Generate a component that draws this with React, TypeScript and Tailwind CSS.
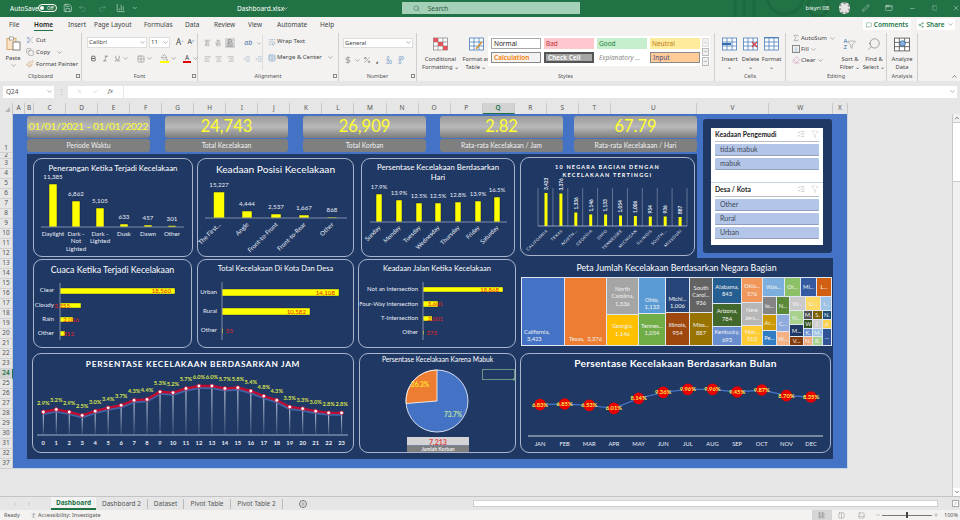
import React from "react";
import {
  Scissors, Copy, Paintbrush, ChevronDown, Bold, Italic, Underline, Grid2x2, PaintBucket,
  AlignLeft, AlignCenter, AlignRight, IndentDecrease, IndentIncrease, WrapText, TableCellsMerge,
  Percent, DollarSign, AlignVerticalJustifyStart, AlignVerticalJustifyCenter, AlignVerticalJustifyEnd,
  X, Check, Sigma, Eraser, Search, Save, Undo2, Redo2, BarChart3, Pen, AppWindow, Minus, Square,
  MessageSquare, Share2, ListChecks, FunnelX, Plus, ChevronLeft, ChevronRight, ChevronUp, PersonStanding,
  ArrowDownToLine, Filter, LayoutGrid, Columns2, PanelBottom,
} from "lucide-react";

const ui = "font-['Noto_Sans',sans-serif]";
const calibri = "font-['Lato',sans-serif]";

function Chev({ className = "" }: { className?: string }) {
  return <ChevronDown size={7} strokeWidth={1.5} className={`text-[#555] ${className}`} />;
}

function TitleBar() {
  return (
    <div className="relative h-[17px] bg-[#217346] text-white flex items-center text-[6.5px] overflow-hidden">
      <svg width="130" height="17" className="absolute left-[730px] top-0" fill="none" stroke="#1d6a40" strokeWidth="3">
        <circle cx="55" cy="-4" r="18" />
        <circle cx="88" cy="6" r="10" />
        <path d="M5 0v17M14 0v17M24 0v17" />
      </svg>
      <span className="ml-[10px] w-[28px]">AutoSave</span>
      <div className="w-[19px] h-[8px] rounded-full border border-white flex items-center justify-end pr-[2px] text-[4.5px]">
        <span className="mr-auto ml-[1px] w-[4px] h-[4px] rounded-full bg-white" />Off
      </div>
      <Save size={10} strokeWidth={1.2} className="ml-[6px]" />
      <Undo2 size={9} strokeWidth={1.2} className="ml-[6px] opacity-40" />
      <Redo2 size={9} strokeWidth={1.2} className="ml-[11px] opacity-40" />
      <BarChart3 size={10} strokeWidth={1.2} className="ml-[9px]" />
      <ChevronDown size={6} className="ml-[7px]" />
      <span className="ml-[99px] w-[44px] text-[6.5px]">Dashboard.xlsx</span>
      <ChevronDown size={7} className="ml-[1px]" />
      <div className="ml-[113px] w-[184px] h-[12px] bg-[#a3d0b6] flex items-center text-[#2f5a42] relative z-10">
        <Search size={7} strokeWidth={1.5} className="ml-[11px]" />
        <span className="ml-[8px]">Search</span>
      </div>
      <span className="ml-[226px] w-[30px] relative text-[6px]">bisyri 08</span>
      <span className="ml-[4px] w-[12px] h-[12px] rounded-full bg-[#e4e4e4] border-2 border-dotted border-[#9a9a9a] relative" />
      <Pen size={8} strokeWidth={1.2} className="ml-[12px] relative" />
      <AppWindow size={8} strokeWidth={1.2} className="ml-[15px] relative" />
      <Minus size={7} strokeWidth={1.2} className="ml-[16px]" />
      <Square size={6} strokeWidth={1.2} className="ml-[16px]" />
      <X size={8} strokeWidth={1.2} className="ml-[15px]" />
    </div>
  );
}

const tabs: [string, string][] = [
  ["File", "w-[30px] pl-[9px]"],
  ["Home", "w-[32px] pl-[4px]"],
  ["Insert", "w-[32px] pl-[6px]"],
  ["Page Layout", "w-[50px] pl-[0px]"],
  ["Formulas", "w-[41px] pl-[0px]"],
  ["Data", "w-[29px] pl-[0px]"],
  ["Review", "w-[34px] pl-[0px]"],
  ["View", "w-[29px] pl-[0px]"],
  ["Automate", "w-[43px] pl-[0px]"],
  ["Help", "w-[30px] pl-[0px]"],
];

function TabsRow() {
  return (
    <div className="h-[16px] flex items-center bg-[#f3f2f1] text-[6.5px] text-[#444]">
      {tabs.map(([t, c]) => (
        <div key={t} className={`${c} h-full flex items-center`}>
          <span className={t === "Home" ? "relative font-semibold text-[#222] border-b border-[#217346] pb-[1px] mt-[1px]" : ""}>{t}</span>
        </div>
      ))}
      <div className="ml-auto mr-[5px] flex items-center gap-[6px]">
        <div className="w-[48px] h-[11px] bg-white flex items-center justify-center gap-[2px] text-[#217346] font-semibold">
          <MessageSquare size={6} strokeWidth={1.5} />Comments
        </div>
        <div className="w-[38px] h-[11px] bg-white flex items-center justify-center gap-[2px] text-[#217346] font-semibold">
          <Share2 size={6} strokeWidth={1.5} />Share<Chev />
        </div>
      </div>
    </div>
  );
}

function Group({ w, label, children, launcher = true }: { w: string; label: string; children: React.ReactNode; launcher?: boolean }) {
  return (
    <div className={`${w} h-full flex flex-col border-r border-[#cfcfcf]`}>
      <div className="flex-1 min-h-0 flex">{children}</div>
      <div className="h-[9px] relative flex items-center justify-center text-[5.5px] text-[#555] leading-none">
        {label}
        {launcher && <span className="absolute right-[1px] top-[2px] w-[4px] h-[4px] border border-[#888] bg-transparent" />}
      </div>
    </div>
  );
}

function GridIcon({ w = 15, h = 14, color = "#4a7ebb", mark }: { w?: number; h?: number; color?: string; mark?: React.ReactNode }) {
  return (
    <svg width={w} height={h} viewBox="0 0 15 14" fill="none" stroke={color} strokeWidth="0.8">
      <rect x="0.5" y="1" width="14" height="12" fill="#fff" />
      <path d="M0.5 5h14M0.5 9h14M5 1v12M10 1v12" />
      {mark}
    </svg>
  );
}

function Big({ icon, lines, w }: { icon: React.ReactNode; lines: string[]; w: string }) {
  return (
    <div className={`${w} flex flex-col items-center pt-[4px] text-[5.8px] text-[#444] leading-[8px] whitespace-nowrap`}>
      <div className="h-[15px] flex items-center justify-center">{icon}</div>
      <div className="mt-[3px] text-center">{lines.map((l) => <div key={l}>{l}</div>)}</div>
    </div>
  );
}

function StyleCell({ cls, children }: { cls: string; children: string }) {
  return <div className={`h-[11px] w-[50px] flex items-center pl-[2px] text-[6.5px] ${cls}`}>{children}</div>;
}

function Ribbon() {
  return (
    <div className="h-[48px] bg-[#f3f2f1] flex text-[#444]">
      <Group w="w-[82px]" label="Clipboard">
        <div className="w-[26px] flex flex-col items-center pt-[3px] text-[5.8px] leading-[8px]">
          <svg width="15" height="15" viewBox="0 0 15 15" fill="none">
            <rect x="1" y="2.5" width="9" height="11" fill="#fbe3c4" stroke="#d39a55" strokeWidth="0.8" />
            <rect x="3.5" y="1" width="4" height="3" fill="#fff" stroke="#888" strokeWidth="0.7" />
            <rect x="7" y="6" width="7" height="8" fill="#fff" stroke="#666" strokeWidth="0.8" />
          </svg>
          <span className="mt-[3px]">Paste</span>
          <Chev />
        </div>
        <div className="flex flex-col gap-[3px] pt-[3px] text-[6px] leading-[9px]">
          <div className="flex items-center gap-[2px]"><Scissors size={8} strokeWidth={1} className="text-[#4a6fa5]" />Cut</div>
          <div className="flex items-center gap-[2px]"><Copy size={8} strokeWidth={1} />Copy<Chev className="ml-[4px]" /></div>
          <div className="flex items-center gap-[2px]"><Paintbrush size={8} strokeWidth={1} className="text-[#c0741f]" />Format Painter</div>
        </div>
      </Group>
      <Group w="w-[116px]" label="Font">
        <div className="flex flex-col pl-[5px] pt-[4px]">
          <div className="flex items-center gap-[2px] h-[11px]">
            <div className="w-[60px] h-[11px] bg-white border border-[#ddd] flex items-center pl-[1px] text-[6px]">Calibri<Chev className="ml-auto" /></div>
            <div className="w-[21px] h-[11px] bg-white border border-[#ddd] flex items-center pl-[1px] text-[6px]">11<Chev className="ml-auto" /></div>
            <span className="ml-[4px] text-[8px]">A<sup className="text-[4px] text-[#4a7ebb]">^</sup></span>
            <span className="ml-[2px] text-[7px]">A<sup className="text-[4px] text-[#4a7ebb]">v</sup></span>
          </div>
          <div className="flex items-center h-[12px] mt-[5px] pl-[3px]">
            <Bold size={7} strokeWidth={2.5} />
            <Italic size={7} strokeWidth={1.5} className="ml-[5px]" />
            <Underline size={7} strokeWidth={1.5} className="ml-[5px]" />
            <Chev className="ml-[1px]" />
            <Grid2x2 size={8} strokeWidth={1} className="ml-[8px]" />
            <Chev className="ml-[1px]" />
            <div className="ml-[7px] flex flex-col items-center"><PaintBucket size={7} strokeWidth={1} /><span className="w-[9px] h-[2px] bg-[#ffff00]" /></div>
            <Chev className="ml-[1px]" />
            <div className="ml-[6px] flex flex-col items-center text-[6.5px] leading-[7px]">A<span className="w-[8px] h-[2px] bg-[#e00000]" /></div>
            <Chev className="ml-[1px]" />
          </div>
        </div>
      </Group>
      <Group w="w-[141px]" label="Alignment">
        <div className="pl-[6px] pt-[2px] w-[65px] border-r border-[#ddd] my-[2px] flex flex-col">
          <div className="flex items-center h-[13px] gap-[4px]">
            <AlignVerticalJustifyStart size={8} strokeWidth={1} />
            <AlignVerticalJustifyCenter size={8} strokeWidth={1} />
            <span className="bg-[#d4d4d4] p-[1px]"><AlignVerticalJustifyEnd size={8} strokeWidth={1} /></span>
            <span className="ml-[5px] text-[7px] italic text-[#4a6fa5]">ab</span><Chev />
          </div>
          <div className="flex items-center h-[13px] gap-[4px] mt-[3px]">
            <AlignLeft size={8} strokeWidth={1} />
            <AlignCenter size={8} strokeWidth={1} />
            <AlignRight size={8} strokeWidth={1} />
            <IndentDecrease size={8} strokeWidth={1} className="ml-[5px] text-[#4a6fa5]" />
            <IndentIncrease size={8} strokeWidth={1} className="text-[#4a6fa5]" />
          </div>
        </div>
        <div className="pl-[5px] pt-[4px] text-[6px] flex flex-col gap-[6px]">
          <div className="flex items-center gap-[1px] h-[10px]"><WrapText size={8} strokeWidth={1} className="text-[#4a6fa5]" />Wrap Text</div>
          <div className="flex items-center gap-[1px] h-[10px]"><TableCellsMerge size={8} strokeWidth={1} className="text-[#2f6ca8]" />Merge &amp; Center<Chev className="ml-[4px]" /></div>
        </div>
      </Group>
      <Group w="w-[78px]" label="Number">
        <div className="pl-[4px] pt-[5px] flex flex-col">
          <div className="w-[70px] h-[10px] bg-white border border-[#ddd] flex items-center pl-[1px] text-[5.8px]">General<Chev className="ml-auto" /></div>
          <div className="flex items-center mt-[8px] pl-[1px]">
            <DollarSign size={8} strokeWidth={1.2} />
            <Chev className="ml-[2px]" />
            <Percent size={8} strokeWidth={1.2} className="ml-[2px]" />
            <span className="ml-[5px] text-[9px] leading-[8px] font-bold">,</span>
            <span className="ml-[7px] text-[4.5px] leading-[4.5px] text-[#4a7ebb] w-[8px]">.0<br />.00</span>
            <span className="ml-[4px] text-[4.5px] leading-[4.5px] text-[#4a7ebb] w-[8px]">.00<br />.0</span>
          </div>
        </div>
      </Group>
      <Group w="w-[298px]" label="Styles" launcher={false}>
        <Big w="w-[47px]" lines={["Conditional", "Formatting ⌄"]} icon={<GridIcon color="#8a8a8a" mark={<path d="M5 5h5v4H5zM0.5 1h4.500v4H.5zM10 9h4.500v4H10z" fill="#e2545c" stroke="none" />} />} />
        <Big w="w-[24px]" lines={["Format as", "Table ⌄"]} icon={<GridIcon mark={<path d="M7 12L13 5" stroke="#d4912a" strokeWidth="1.5" />} />} />
        <div className="ml-[0px] mt-[3px] w-[222px] h-[30px] bg-white pl-[3px] pt-[2px] flex">
          <div className="grid grid-cols-[50px_50px_50px_50px] gap-x-[3px] gap-y-[3px] content-start">
            <StyleCell cls="bg-white border border-[#a8a8a8] text-[#222]">Normal</StyleCell>
            <StyleCell cls="bg-[#ffc7ce] text-[#c0303a]">Bad</StyleCell>
            <StyleCell cls="bg-[#c6efce] text-[#1f7a35]">Good</StyleCell>
            <StyleCell cls="bg-[#ffeb9c] text-[#b87a1a]">Neutral</StyleCell>
            <StyleCell cls="bg-[#f2f2f2] border border-[#8a8a8a] text-[#fa7d00] font-semibold">Calculation</StyleCell>
            <StyleCell cls="bg-[#a5a5a5] border-2 border-[#555] text-white font-semibold">Check Cell</StyleCell>
            <StyleCell cls="bg-white text-[#8a8a8a] italic">Explanatory ...</StyleCell>
            <StyleCell cls="bg-[#ffcc99] border border-[#8a8a8a] text-[#4a4a7a]">Input</StyleCell>
          </div>
          <div className="ml-[2px] w-[7px] flex flex-col gap-px">
            <div className="h-[9px] bg-[#f3f2f1] border border-[#ddd] flex items-center justify-center"><ChevronUp size={5} className="text-[#aaa]" /></div>
            <div className="h-[9px] bg-[#f3f2f1] border border-[#bbb] flex items-center justify-center"><ChevronDown size={5} /></div>
            <div className="h-[9px] bg-[#f3f2f1] border border-[#bbb] flex items-center justify-center"><ChevronDown size={5} /></div>
          </div>
        </div>
      </Group>
      <Group w="w-[71px]" label="Cells" launcher={false}>
        <div className="flex pl-[4px]">
          <Big w="w-[21px]" lines={["Insert", "⌄"]} icon={<GridIcon mark={<path d="M0 7h9" stroke="#2f6ca8" strokeWidth="2" />} />} />
          <Big w="w-[21px]" lines={["Delete", "⌄"]} icon={<GridIcon mark={<path d="M9 5l5 5m0-5l-5 5" stroke="#d83b3b" strokeWidth="1.2" />} />} />
          <Big w="w-[21px]" lines={["Format", "⌄"]} icon={<GridIcon mark={<path d="M0 0h15" stroke="#2f6ca8" strokeWidth="1.5" />} />} />
        </div>
      </Group>
      <Group w="w-[101px]" label="Editing" launcher={false}>
        <div className="w-[52px] pl-[6px] pt-[1px] flex flex-col gap-[2px] text-[6px] leading-[9px]">
          <div className="flex items-center gap-[1px]"><Sigma size={8} strokeWidth={1} />AutoSum<Chev className="ml-[1px]" /></div>
          <div className="flex items-center gap-[1px]"><ArrowDownToLine size={8} strokeWidth={1} className="text-[#2f6ca8] border border-[#888]" />Fill<Chev /></div>
          <div className="flex items-center gap-[1px]"><Eraser size={8} strokeWidth={1} className="text-[#c2589a]" />Clear<Chev /></div>
        </div>
        <Big w="w-[24px]" lines={["Sort &", "Filter ⌄"]} icon={<span className="flex items-center text-[6px] leading-[6px] text-[#2f6ca8]"><span>A<br />Z</span><Filter size={9} strokeWidth={1} className="text-[#555]" /></span>} />
        <Big w="w-[24px]" lines={["Find &", "Select ⌄"]} icon={<Search size={14} strokeWidth={0.8} className="-scale-x-100" />} />
      </Group>
      <Group w="w-[31px]" label="Analysis" launcher={false}>
        <Big w="w-[30px]" lines={["Analyze", "Data"]} icon={<GridIcon w={16} h={15} color="#555" mark={<circle cx="8" cy="6" r="2.500" fill="#8fb4dd" stroke="#2f6ca8" />} />} />
      </Group>
      <div className="flex-1 flex items-end justify-end pr-[2px] pb-[1px]"><ChevronUp size={7} /></div>
    </div>
  );
}

function FormulaBar() {
  return (
    <div className="h-[22px] bg-[#e6e6e6] pt-[5px] text-[#555]">
      <div className="h-[12px] flex items-center pl-[3px] pr-[3px] text-[6.5px]">
        <div className="w-[51px] h-full bg-white flex items-center pl-[3px]">Q24<Chev className="ml-auto mr-[1px]" /></div>
        <span className="w-[14px] text-center text-[#aaa]">⋮</span>
        <div className="w-[56px] h-full bg-white flex items-center pl-[8px] gap-[9px] text-[#999] border-r border-[#e6e6e6]">
          <X size={7} strokeWidth={1} /><Check size={7} strokeWidth={1} /><span className="italic text-[#555] text-[6px]">fx</span>
        </div>
        <div className="flex-1 h-full bg-white flex items-center justify-end pr-[1px]"><Chev /></div>
      </div>
    </div>
  );
}

const cols = ["A", "B", "C", "D", "E", "F", "G", "H", "I", "J", "K", "L", "M", "N", "O", "P", "Q", "R", "S", "T", "U", "V", "W", "X"];

function ColHeaders() {
  return (
    <div className="h-[11px] flex bg-[#e6e6e6] text-[6.5px] text-[#555]">
      <div className="w-[13px] border-r border-[#c4c4c4] flex items-end justify-end pr-[2px] pb-[2px]">
        <span className="w-0 h-0 border-l-[5px] border-l-transparent border-b-[5px] border-b-[#b5b5b5]" />
      </div>
      <div className="grid grid-cols-[12px_9px_repeat(18,32.06px)_86px_72px_64px_15px]">
        {cols.map((c) => (
          <div key={c} className={`flex items-center justify-center border-r border-[#c9c9c9] ${c === "Q" ? "bg-[#d2d2d2] text-[#217346] border-b border-b-[#217346] font-semibold" : ""}`}>{c}</div>
        ))}
      </div>
    </div>
  );
}

const rows: [string, string][] = [
  ["1", "h-[39px] items-end pb-[0px]"],
  ["2", "h-[6px] items-center overflow-hidden"],
  ...Array.from({ length: 30 }, (_, i): [string, string] => [String(i + 3), "h-[10px] items-center"]),
  ["37", "h-[10px] items-center"],
];

function RowHeaders() {
  return (
    <div className="w-[13px] bg-[#e6e6e6] text-[6.5px] text-[#555] flex flex-col leading-none">
      {rows.map(([r, c]) => (
        <div key={r} className={`flex justify-center border-b border-[#d0d0d0] border-r ${c} ${r === "24" ? "bg-[#d2d2d2] text-[#217346] border-r-[#217346] font-semibold" : "border-r-[#c9c9c9]"}`}>{r}</div>
      ))}
    </div>
  );
}

function Kpi({ value, label, cls, big = true }: { value: string; label: string; cls: string; big?: boolean }) {
  return (
    <div className={`${cls} w-[123px] flex flex-col gap-[1px] ${calibri}`}>
      <div className={`h-[22px] rounded-[3px] bg-gradient-to-b from-[#9a9a9a] via-[#b9b9b9] to-[#7b7b7b] flex items-center justify-center text-[#ffff2e] ${big ? "text-[16.500px]" : "text-[10px]"}`}>{value}</div>
      <div className="h-[13px] rounded-[3px] bg-[#7f7f7f] flex items-center justify-center text-[6.800px] text-[#f0f0f0]">{label}</div>
    </div>
  );
}

function Card({ cls, title, titleCls, view, children }: { cls: string; title: React.ReactNode; titleCls: string; view: [number, number, number, number]; children: React.ReactNode }) {
  return (
    <div className={`${cls} rounded-[9px] border border-[#aab5cc] flex flex-col ${calibri}`}>
      <div className={`${titleCls} flex items-center justify-center text-center text-white shrink-0 whitespace-nowrap`}>{title}</div>
      <svg width={view[2]} height={view[3]} viewBox={view.join(" ")} className="block overflow-visible" fill="#fff">
        {children}
      </svg>
    </div>
  );
}

const W = "#e9edf5";
const Y = "#ffff00";

function VBars({ data, axis, x1, x2, size = 6.2, rot = false, catY }: {
  data: { x: number; w: number; top: number; val: string; cat: string | string[] }[];
  axis: number; x1: number; x2: number; size?: number; rot?: boolean; catY: number;
}) {
  return (
    <g>
      {data.map((d) => (
        <g key={d.x}>
          <rect x={d.x - d.w / 2} y={d.top} width={d.w} height={axis - d.top} fill={Y} stroke="#14264a" strokeWidth="0.5" />
          <text x={d.x} y={d.top - 5} textAnchor="middle" fontSize={size} fill={W}>{d.val}</text>
          {rot ? (
            <text x={d.x + 2} y={catY} textAnchor="end" fontSize={size} fill={W} transform={`rotate(-45 ${d.x + 2} ${catY})`}>{d.cat as string}</text>
          ) : (
            (d.cat as string[]).map((l, i) => (
              <text key={l} x={d.x} y={catY + i * 7.3} textAnchor="middle" fontSize={size} fill={W}>{l}</text>
            ))
          )}
        </g>
      ))}
      <line x1={x1} x2={x2} y1={axis} y2={axis} stroke="#9aa6bd" strokeWidth="0.8" />
    </g>
  );
}

function HBars({ axis, y1, y2, labelX, data, size = 6.2 }: {
  axis: number; y1: number; y2: number; labelX: number; size?: number;
  data: { y: number; h: number; end: number; cat: string; val: string; valX: number; labY: number }[];
}) {
  return (
    <g>
      {data.map((d) => (
        <g key={d.cat}>
          <rect x={axis} y={d.y} width={d.end - axis} height={d.h} fill={Y} stroke="#14264a" strokeWidth="0.4" />
          <text x={labelX} y={d.labY} textAnchor="end" fontSize={size} fill={W}>{d.cat}</text>
          <text x={d.valX} y={d.y + d.h / 2 + 2.2} textAnchor="end" fontSize={size} fill="#e8201c">{d.val}</text>
        </g>
      ))}
      <line x1={axis} x2={axis} y1={y1} y2={y2} stroke="#9aa6bd" strokeWidth="0.8" />
    </g>
  );
}

const hours = [2.9, 3.2, 2.9, 2.5, 3.0, 3.4, 3.7, 4.3, 4.4, 5.3, 5.2, 5.7, 6.0, 6.0, 5.7, 5.8, 5.4, 4.8, 4.3, 3.5, 3.3, 3.0, 2.8, 2.8];

function HourChart() {
  const px = (i: number) => 43.3 + i * 12.97;
  const py = (p: number) => 411 - (p - 2.9) * 8.4;
  const line = hours.map((p, i) => `${px(i)},${py(p)}`).join(" ");
  return (
    <g>
      <defs>
        <linearGradient id="stem" x1="0" y1="0" x2="0" y2="1">
          <stop offset="0" stopColor="#dfe6f2" />
          <stop offset="1" stopColor="#dfe6f2" stopOpacity="0.15" />
        </linearGradient>
      </defs>
      {hours.map((p, i) => (
        <rect key={i} x={px(i) - 0.5} y={py(p)} width="1" height={433 - py(p)} fill="url(#stem)" />
      ))}
      <polyline points={line} fill="none" stroke="#4a6fb5" strokeWidth="4" transform="translate(0 1)" opacity="0.8" />
      <polyline points={line} fill="none" stroke="#c00a2e" strokeWidth="2.4" />
      {hours.map((p, i) => (
        <g key={i}>
          <circle cx={px(i)} cy={py(p)} r="1.900" fill="#fff" stroke="#c00a2e" strokeWidth="0.8" />
          <text x={px(i)} y={py(p) - 7} textAnchor="middle" fontSize="5.600" fontWeight="700" fill="#d6e04c">{p.toFixed(1)}%</text>
          <text x={px(i)} y={444} textAnchor="middle" fontSize="5.800" fontWeight="700" fill={W}>{i}</text>
        </g>
      ))}
      <line x1="37" x2="348" y1="434" y2="434" stroke="#c9d2e2" strokeWidth="0.8" />
    </g>
  );
}

const months = [
  ["JAN", 176, "6.83%"], ["FEB", 174, "6.85%"], ["MAR", 178, "6.53%"], ["APR", 187, "6.01%"], ["MAY", 157, "8.14%"], ["JUN", 139, "9.36%"],
  ["JUL", 130, "9.96%"], ["AUG", 130, "9.96%"], ["SEP", 138, "9.45%"], ["OCT", 132, "9.87%"], ["NOV", 149, "8.70%"], ["DEC", 153, "8.35%"],
] as const;

function MonthChart() {
  const px = (i: number) => 540 + i * 24.64;
  const py = (v: number) => 345 + v / 3;
  return (
    <g>
      <polyline points={months.map((m, i) => `${px(i)},${py(m[1])}`).join(" ")} fill="none" stroke="#4472c4" strokeWidth="1.400" />
      {months.map((m, i) => (
        <g key={m[0]}>
          <circle cx={px(i)} cy={py(m[1])} r="5.800" fill="#e80000" />
          <text x={px(i)} y={py(m[1]) + 2} textAnchor="middle" fontSize="5.800" fontWeight="700" fill="#ffe94a">{m[2]}</text>
          <text x={px(i)} y={445} textAnchor="middle" fontSize="5.800" fill={W}>{m[0]}</text>
        </g>
      ))}
      <line x1="528" x2="823" y1="435" y2="435" stroke="#fff" strokeWidth="0.8" />
    </g>
  );
}

const states = [
  ["CALIFORNIA", "3,423", 33], ["TEXAS", "3,376", 32.500], ["NORTH...", "1,336", 13.500], ["GEORGIA", "1,146", 11.500], ["OHIO", "1,133", 11.500],
  ["TENNESSEE", "1,054", 10.500], ["MICHIGAN", "1,006", 10], ["ILLINOIS", "954", 9.500], ["SOUTH...", "936", 9.500], ["MISSOURI", "887", 9],
] as const;

function StateChart() {
  return (
    <g>
      {states.map((s, i) => {
        const gx = 538 + i * 14.9;
        const cx = gx + 8;
        return (
          <g key={s[0]}>
            <line x1={gx} x2={gx} y1="187" y2="225" stroke="#8d9ab5" strokeWidth="0.6" />
            <rect x={cx - 1.5} y={225 - s[2]} width="3" height={s[2]} fill={Y} />
            <text x={cx + 1.800} y={222 - s[2]} fontSize="4.800" fontWeight="700" fill={W} transform={`rotate(-90 ${cx + 1.800} ${222 - s[2]})`}>{s[1]}</text>
            <text x={cx + 2} y="230" textAnchor="end" fontSize="4" letterSpacing="0.500" fill={W} transform={`rotate(-45 ${cx + 2} 230)`}>{s[0]}</text>
          </g>
        );
      })}
      <line x1="687" x2="687" y1="187" y2="225" stroke="#8d9ab5" strokeWidth="0.6" />
      <line x1="538" x2="687" y1="225" y2="225" stroke="#c6cfdf" strokeWidth="0.7" />
    </g>
  );
}

function PieChart() {
  const cx = 437;
  const cy = 400;
  const r = 31;
  const a = (26.3 / 100) * 2 * Math.PI;
  const sx = cx - r * Math.sin(a);
  const sy = cy - r * Math.cos(a);
  return (
    <g>
      <circle cx={cx} cy={cy} r={r} fill="#4472c4" stroke="#fff" strokeWidth="0.8" />
      <path d={`M${cx} ${cy} L${sx} ${sy} A${r} ${r} 0 0 1 ${cx} ${cy - r} Z`} fill="#ed7d31" stroke="#fff" strokeWidth="0.8" />
      <text x="420" y="386" textAnchor="middle" fontSize="6.500" fontWeight="700" fill="#ffe22e">26.3%</text>
      <text x="453" y="416" textAnchor="middle" fontSize="6.500" fontWeight="700" fill="#b9e0a0">73.7%</text>
      <rect x="407" y="436" width="62" height="8.500" fill="#d4d4d6" />
      <text x="438" y="443.500" textAnchor="middle" fontSize="7" fontWeight="700" fill="#e04545">7,213</text>
      <rect x="407" y="445" width="62" height="6" fill="#7f7f7f" />
      <text x="438" y="450.300" textAnchor="middle" fontSize="5" fontWeight="700" fill="#f0f0f0">Jumlah Korban</text>
      <rect x="482.500" y="368.500" width="32" height="10" fill="none" stroke="#6f9f8a" strokeWidth="0.9" />
      <rect x="513" y="377" width="2.500" height="2.500" fill="#6f9f8a" />
    </g>
  );
}

function Tile({ cls, children }: { cls: string; children?: React.ReactNode }) {
  return (
    <div className={`${cls} flex flex-col items-center justify-center text-center overflow-hidden text-[5.800px] leading-[7.500px] text-[#f2f2f2]`}>{children}</div>
  );
}

function Treemap() {
  return (
    <div className="h-[69px] w-[311px] bg-[#dfe6f2] p-px flex gap-px">
      <Tile cls="w-[42px] !justify-end !items-start pl-[2px] pb-[2px] !text-left bg-[#4472c4]">California,<br />&nbsp;&nbsp;3,423</Tile>
      <Tile cls="w-[41px] !justify-end pb-[2px] bg-[#ed7d31]">Texas,&nbsp; 3,376</Tile>
      <div className="w-[31px] flex flex-col gap-px">
        <Tile cls="h-[36px] bg-[#a5a5a5]">North<br />Carolina,<br />1,336</Tile>
        <Tile cls="flex-1 bg-[#ffc000]">Georgia,<br />1,146</Tile>
      </div>
      <div className="w-[26px] flex flex-col gap-px">
        <Tile cls="h-[35px] bg-[#5b9bd5] !justify-end pb-[2px]">Ohio,<br />1,133</Tile>
        <Tile cls="flex-1 bg-[#70ad47]">Tennes...<br />1,054</Tile>
      </div>
      <div className="w-[23px] flex flex-col gap-px">
        <Tile cls="h-[34px] bg-[#264478] !justify-end pb-[2px]">Michi...<br />1,006</Tile>
        <Tile cls="flex-1 bg-[#9e480e]">Illinois,<br />954</Tile>
      </div>
      <div className="w-[22px] flex flex-col gap-px">
        <Tile cls="h-[34px] bg-[#636363]">South<br />Carol...<br />936</Tile>
        <Tile cls="flex-1 bg-[#997300]">Miss...<br />887</Tile>
      </div>
      <div className="w-[28px] flex flex-col gap-px">
        <Tile cls="h-[25px] bg-[#255e91]">Alabama,<br />843</Tile>
        <Tile cls="h-[22px] bg-[#43682b]">Arizona,<br />784</Tile>
        <Tile cls="flex-1 bg-[#698ed0]">Kentucky,<br />693</Tile>
      </div>
      <div className="w-[20px] flex flex-col gap-px">
        <Tile cls="h-[24px] bg-[#f1975a]">Okla...<br />576</Tile>
        <Tile cls="h-[22px] bg-[#b7b7b7]">New<br />Jers...</Tile>
        <Tile cls="flex-1 bg-[#ffcd33]">Mar...<br />513</Tile>
      </div>
      <div className="flex-1 flex flex-col gap-px">
        <div className="h-[20px] flex gap-px">
          <Tile cls="w-[21px] bg-[#7cafdd]">Was...</Tile>
          <Tile cls="w-[15px] bg-[#8cc168]">Or...</Tile>
          <Tile cls="w-[15px] bg-[#335aa1]">Mi...</Tile>
          <Tile cls="flex-1 bg-[#d26012]">L...</Tile>
        </div>
        <div className="flex-1 flex gap-px">
          <div className="w-[13px] flex flex-col gap-px">
            <Tile cls="h-[17px] bg-[#848484]">Io...</Tile>
            <Tile cls="h-[15px] bg-[#cc9a00]">Ar...</Tile>
            <Tile cls="flex-1 bg-[#327dc2]">Pe...</Tile>
          </div>
          <div className="w-[12px] flex flex-col gap-px">
            <Tile cls="h-[17px] bg-[#5a8a39]">N...</Tile>
            <Tile cls="h-[16px] bg-[#8faadc]">C...</Tile>
            <Tile cls="flex-1 bg-[#f4b183]">W...</Tile>
          </div>
          <div className="flex-1 flex flex-col gap-px">
            <div className="h-[13px] flex gap-px">
              <Tile cls="w-[15px] bg-[#c9c9c9]">W...</Tile>
              <Tile cls="w-[14px] bg-[#ffd966]">U...</Tile>
              <Tile cls="flex-1 bg-[#9dc3e6]">I...</Tile>
            </div>
            <div className="flex-1 flex gap-px">
              <div className="w-[13px] flex flex-col gap-px">
                <Tile cls="h-[13px] bg-[#a9d18e]">N...</Tile>
                <Tile cls="h-[11px] bg-[#1f3864]">M...</Tile>
                <Tile cls="flex-1 bg-[#843c0c]">V...</Tile>
              </div>
              <div className="flex-1 grid grid-cols-3 grid-rows-4 gap-px text-[4px]">
                <Tile cls="bg-[#525252]">M.</Tile>
                <Tile cls="bg-[#7f6000]">S.</Tile>
                <Tile cls="bg-[#1f4e79]">N.</Tile>
                <Tile cls="bg-[#375623]">W</Tile>
                <Tile cls="bg-[#d0cece]">C</Tile>
                <Tile cls="bg-[#ffd24d]">o</Tile>
                <Tile cls="bg-[#6f94d6]">K.</Tile>
                <Tile cls="bg-[#9dc3e6]">M.</Tile>
                <Tile cls="row-span-2 bg-[#2f5597]">...</Tile>
                <Tile cls="bg-[#f4a77a]">N.</Tile>
                <Tile cls="bg-[#a9d18e]">R.</Tile>
              </div>
            </div>
          </div>
        </div>
      </div>
    </div>
  );
}

function SlicerItem({ children }: { children: string }) {
  return <div className="h-[12px] rounded-[1px] bg-[#b4c6e7] border-b border-[#8f9fbd] flex items-center pl-[5px] text-[7px] text-[#3c4658]">{children}</div>;
}

function SlicerHead({ title }: { title: string }) {
  return (
    <div className="h-[14px] mx-[1px] flex items-center border-b border-[#b9c0cc] text-[6.800px] font-bold text-[#222]">
      <span>{title}</span>
      <ListChecks size={8} strokeWidth={1} className="ml-auto text-[#666]" />
      <FunnelX size={8} strokeWidth={1} className="ml-[6px] text-[#aaa]" />
    </div>
  );
}

function Slicers() {
  return (
    <div className={`w-[129px] h-[134px] mt-[5px] ml-[6px] rounded-[3px] bg-[#1f3864] pt-[9px] pl-[8px] ${calibri}`}>
      <div className="w-[112px] h-[117px] bg-white px-[3px]">
        <div className="h-[54px]">
          <SlicerHead title="Keadaan Pengemudi" />
          <div className="mt-[2px] mx-[1px] flex flex-col gap-[2px]">
            <SlicerItem>  tidak mabuk</SlicerItem>
            <SlicerItem>mabuk</SlicerItem>
          </div>
        </div>
        <div className="border-t border-[#c6d4ea] -mx-[3px] px-[3px]">
          <SlicerHead title="Desa / Kota" />
          <div className="mt-[2px] mx-[1px] flex flex-col gap-[2px]">
            <SlicerItem>Other</SlicerItem>
            <SlicerItem>Rural</SlicerItem>
            <SlicerItem>Urban</SlicerItem>
          </div>
        </div>
      </div>
    </div>
  );
}

function Sheet() {
  return (
    <div className="w-[835px] h-[355px] bg-[#4472c4] pl-[14px] border-r border-b border-[#c9d3e6]">
      <div className="flex">
        <div className="w-[670px] shrink-0">
          <div className="flex pt-[2px] pb-[2px]">
            <Kpi cls="" value="01/01/2021 - 01/01/2022" label="Periode Waktu" big={false} />
            <Kpi cls="ml-[15px]" value="24,743" label="Total Kecelakaan" />
            <Kpi cls="ml-[15px]" value="26,909" label="Total Korban" />
            <Kpi cls="ml-[14px]" value="2.82" label="Rata-rata Kecelakaan / Jam" />
            <Kpi cls="ml-[11px]" value="67.79" label="Rata-rata Kecelakaan / Hari" />
          </div>
          <div className="h-[104px] bg-[#1f3864] pt-[4px] pl-[6px] flex items-start">
            <Card cls="w-[160px] h-[99px]" title="Penerangan Ketika Terjadi Kecelakaan" titleCls="h-[20px] text-[7.800px]" view={[34, 178, 158, 77]}>
              <VBars axis={226} x1={41} x2={184} catY={235} data={[
                { x: 53, w: 8, top: 183, val: "11,385", cat: ["Daylight"] },
                { x: 76, w: 8, top: 200, val: "6,862", cat: ["Dark -", "Not", "Lighted"] },
                { x: 100, w: 8, top: 207, val: "5,105", cat: ["Dark -", "Lighted"] },
                { x: 124, w: 8, top: 223, val: "633", cat: ["Dusk"] },
                { x: 148, w: 8, top: 224, val: "457", cat: ["Dawn"] },
                { x: 172, w: 8, top: 224.5, val: "301", cat: ["Other"] },
              ]} />
            </Card>
            <Card cls="w-[157px] h-[99px] ml-[4px]" title="Keadaan Posisi Kecelakaan" titleCls="h-[22px] text-[10.200px]" view={[198, 180, 155, 75]}>
              <VBars rot axis={217} x1={205} x2={347} catY={224} data={[
                { x: 219, w: 11, top: 191, val: "15,227", cat: "The First..." },
                { x: 247, w: 10, top: 210, val: "4,444", cat: "Angle" },
                { x: 276, w: 10, top: 213, val: "2,537", cat: "Front-to-Front" },
                { x: 304, w: 10, top: 214, val: "1,667", cat: "Front-to-Rear" },
                { x: 332, w: 10, top: 216, val: "868", cat: "Other" },
              ]} />
            </Card>
            <Card cls="w-[154px] h-[99px] ml-[7px]" title={<span>Persentase Kecelakaan Berdasarkan<br />Hari</span>} titleCls="h-[26px] text-[7.800px] leading-[10px]" view={[362, 184, 152, 71]}>
              <VBars rot axis={221} x1={370} x2={507} catY={227} size={6} data={[
                { x: 379, w: 6, top: 193, val: "17.9%", cat: "Sunday" },
                { x: 399, w: 6, top: 199, val: "13.9%", cat: "Monday" },
                { x: 419, w: 6, top: 202, val: "12.5%", cat: "Tuesday" },
                { x: 438, w: 6, top: 202, val: "12.5%", cat: "Wednesday" },
                { x: 458, w: 6, top: 201, val: "12.8%", cat: "Thursday" },
                { x: 478, w: 6, top: 200, val: "13.9%", cat: "Friday" },
                { x: 497, w: 6, top: 196, val: "16.5%", cat: "Saturday" },
              ]} />
            </Card>
            <Card cls="w-[175px] h-[99px] ml-[5px] -mt-[1px]" title={<span className="font-bold tracking-[1.200px]">10 NEGARA BAGIAN DENGAN<br />KECELAKAAN TERTINGGI</span>} titleCls="h-[26px] text-[5.500px] leading-[8px]" view={[521, 183, 173, 71]}>
              <StateChart />
            </Card>
          </div>
        </div>
        <Slicers />
      </div>
      <div className="w-[806px] h-[201px] bg-[#1f3864] pt-px pl-[6px]">
        <div className="flex items-start">
          <Card cls="w-[159px] h-[89px]" title="Cuaca Ketika Terjadi Kecelakaan" titleCls="h-[20px] text-[8.800px]" view={[34, 279, 157, 67]}>
            <HBars axis={60} y1={282} y2={339} labelX={54} data={[
              { y: 287, h: 6, end: 175, cat: "Clear", val: "18,560", valX: 171, labY: 291 },
              { y: 302, h: 5, end: 81, cat: "Cloudy", val: "3,355", valX: 70, labY: 306 },
              { y: 316, h: 5, end: 73, cat: "Rain", val: "2,016", valX: 79, labY: 320 },
              { y: 330, h: 5, end: 65, cat: "Other", val: "312", valX: 74, labY: 334 },
            ]} />
          </Card>
          <Card cls="w-[157px] h-[89px] ml-[5px]" title="Total Kecelakaan Di Kota Dan Desa" titleCls="h-[18px] text-[7.500px]" view={[198, 277, 155, 69]}>
            <HBars axis={222} y1={281} y2={339} labelX={217} data={[
              { y: 288, h: 7, end: 339, cat: "Urban", val: "14,108", valX: 335, labY: 293 },
              { y: 307, h: 7, end: 310, cat: "Rural", val: "10,582", valX: 306, labY: 312 },
              { y: 327, h: 6, end: 223, cat: "Other", val: "55", valX: 233, labY: 331 },
            ]} />
          </Card>
          <Card cls="w-[158px] h-[89px] ml-[4px]" title="Keadaan Jalan Ketika Kecelakaan" titleCls="h-[18px] text-[7.500px]" view={[359, 277, 156, 69]}>
            <HBars axis={423} y1={281} y2={339} labelX={418} size={6} data={[
              { y: 286, h: 5, end: 503, cat: "Not an Intersection", val: "18,868", valX: 499, labY: 290 },
              { y: 300, h: 6, end: 438, cat: "Four-Way Intersection", val: "3,601", valX: 443, labY: 305 },
              { y: 315, h: 5, end: 432, cat: "T-Intersection", val: "2,001", valX: 443, labY: 319 },
              { y: 329, h: 5, end: 424, cat: "Other", val: "273", valX: 437, labY: 333 },
            ]} />
          </Card>
          <div className={`ml-[5px] w-[311px] flex flex-col ${calibri}`}>
            <div className="h-[18px] flex items-center justify-center text-[8.800px] text-white whitespace-nowrap">Peta Jumlah Kecelakaan Berdasarkan Negara Bagian</div>
            <Treemap />
          </div>
        </div>
        <div className="flex items-start mt-[5px] -ml-[1px]">
          <Card cls="w-[322px] h-[100px]" title={<span className="font-bold tracking-[0.700px]">PERSENTASE KECELAKAAN BERDASARKAN JAM</span>} titleCls="h-[20px] text-[8.300px]" view={[33, 373, 320, 78]}>
            <HourChart />
          </Card>
          <Card cls="w-[157px] h-[100px] ml-[5px]" title="Persentase  Kecelakaan Karena Mabuk" titleCls="h-[10px] text-[6.700px]" view={[360, 363, 155, 88]}>
            <PieChart />
          </Card>
          <Card cls="w-[311px] h-[100px] ml-[4px]" title={<span className="font-bold tracking-[0.300px]">Persentase Kecelakaan Berdasarkan Bulan</span>} titleCls="h-[20px] text-[10.200px]" view={[521, 373, 309, 78]}>
            <MonthChart />
          </Card>
        </div>
      </div>
    </div>
  );
}

function VScroll() {
  return (
    <div className="w-[8px] ml-auto bg-[#f0f0f0] border-l border-[#c9c9c9] flex flex-col">
      <div className="h-[8px] flex items-center justify-center"><ChevronUp size={6} /></div>
      <div className="h-[60px] bg-white border-y border-[#c9c9c9]" />
      <div className="flex-1" />
      <div className="h-[8px] bg-white flex items-center justify-center"><ChevronDown size={6} /></div>
    </div>
  );
}

function SheetTabs() {
  const items: [string, string][] = [
    ["Dashboard 2", "w-[52px]"],
    ["Dataset", "w-[36px]"],
    ["Pivot Table", "w-[47px]"],
    ["Pivot Table 2", "w-[52px]"],
  ];
  return (
    <div className="h-[14px] border-t border-[#c4c4c4] bg-[#e6e6e6] flex items-center text-[6.500px] text-[#555]">
      <ChevronLeft size={6} className="ml-[12px] text-[#aaa]" />
      <ChevronRight size={6} className="ml-[8px] text-[#aaa]" />
      <div className="ml-[19px] w-[45px] h-full bg-[#f3f3f3] border-b-2 border-[#217346] text-[#217346] font-bold flex items-center justify-center">Dashboard</div>
      {items.map(([t, w]) => (
        <div key={t} className={`${w} h-[10px] flex items-center justify-center border-r border-[#bbb]`}>{t}</div>
      ))}
      <span className="ml-[16px] w-[8px] h-[8px] rounded-full border border-[#777] flex items-center justify-center"><Plus size={6} strokeWidth={1.5} /></span>
      <div className="ml-[166px] w-[465px] h-[7px] bg-white border border-[#d0d0d0]" />
      <div className="ml-auto mr-[1px] w-[7px] h-[7px] bg-white border border-[#aaa] flex items-center justify-center"><ChevronRight size={5} /></div>
    </div>
  );
}

function StatusBar() {
  return (
    <div className="h-[10px] bg-[#f3f2f1] flex items-center text-[5.500px] text-[#555]">
      <span className="ml-[4px] w-[26px]">Ready</span>
      <PersonStanding size={7} strokeWidth={1} />
      <span className="ml-[1px]">Accessibility: Investigate</span>
      <div className="ml-auto h-full flex items-center">
        <div className="w-[20px] h-full bg-[#d6d6d6] flex items-center justify-center"><LayoutGrid size={7} strokeWidth={1} /></div>
        <div className="w-[20px] flex justify-center"><Columns2 size={7} strokeWidth={1} /></div>
        <div className="w-[20px] flex justify-center"><PanelBottom size={7} strokeWidth={1} /></div>
        <Minus size={6} strokeWidth={1} className="ml-[3px]" />
        <div className="relative w-[50px] h-px bg-[#777] mx-[1px] flex items-center justify-center">
          <span className="w-[2px] h-[6px] bg-[#444]" />
        </div>
        <Plus size={6} strokeWidth={1} />
        <span className="ml-[5px] mr-[2px]">100%</span>
      </div>
    </div>
  );
}

export default function App() {
  return (
    <div className={`w-[960px] h-[520px] overflow-hidden flex flex-col bg-[#e6e6e6] ${ui}`}>
      <TitleBar />
      <TabsRow />
      <Ribbon />
      <FormulaBar />
      <ColHeaders />
      <div className="h-[383px] flex">
        <div className="flex flex-col">
          <div className="flex">
            <RowHeaders />
            <Sheet />
          </div>
        </div>
        <VScroll />
      </div>
      <SheetTabs />
      <StatusBar />
    </div>
  );
}
